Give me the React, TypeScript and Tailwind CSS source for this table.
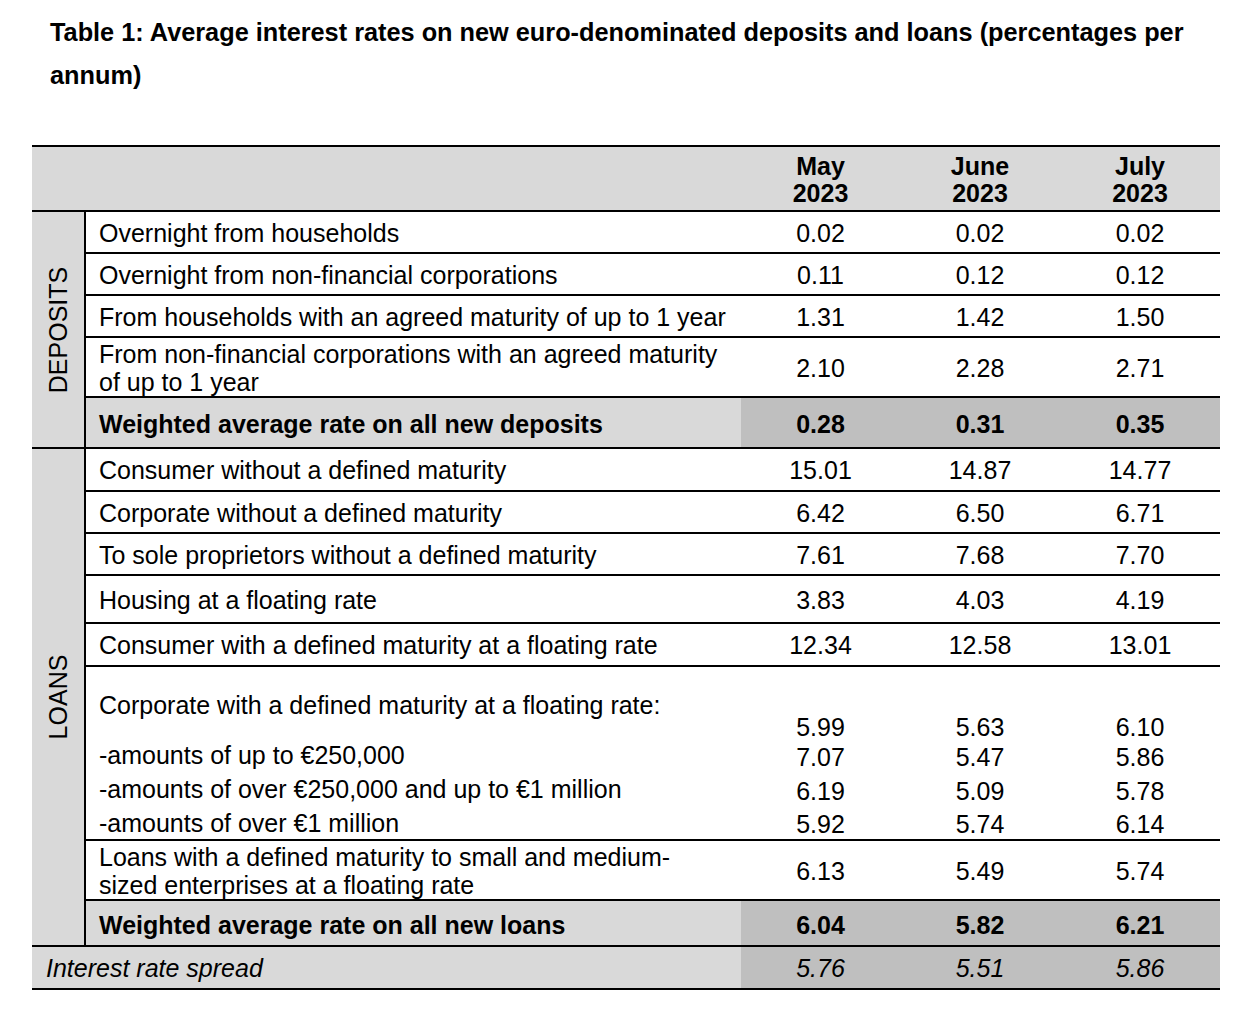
import React from "react"

type Row = {
  text: React.ReactNode
  values: string[]
  h: string
  kind?: "normal" | "total"
}

const font = { fontFamily: '"Liberation Sans", Arial, sans-serif' }

const colW = ["w-[159px]", "w-[160px]", "w-[160px]"]

const deposits: Row[] = [
  { text: "Overnight from households", values: ["0.02", "0.02", "0.02"], h: "h-[42px]" },
  { text: "Overnight from non-financial corporations", values: ["0.11", "0.12", "0.12"], h: "h-[42px]" },
  { text: "From households with an agreed maturity of up to 1 year", values: ["1.31", "1.42", "1.50"], h: "h-[42px]" },
  {
    text: (
      <>
        From non-financial corporations with an agreed maturity
        <br />
        of up to 1 year
      </>
    ),
    values: ["2.10", "2.28", "2.71"],
    h: "h-[60px]",
  },
  { text: "Weighted average rate on all new deposits", values: ["0.28", "0.31", "0.35"], h: "h-[49px]", kind: "total" },
]

const loansTop: Row[] = [
  { text: "Consumer without a defined maturity", values: ["15.01", "14.87", "14.77"], h: "h-[43px]" },
  { text: "Corporate without a defined maturity", values: ["6.42", "6.50", "6.71"], h: "h-[42px]" },
  { text: "To sole proprietors without a defined maturity", values: ["7.61", "7.68", "7.70"], h: "h-[42px]" },
  { text: "Housing at a floating rate", values: ["3.83", "4.03", "4.19"], h: "h-[48px]" },
  { text: "Consumer with a defined maturity at a floating rate", values: ["12.34", "12.58", "13.01"], h: "h-[43px]" },
]

const loansBottom: Row[] = [
  {
    text: (
      <>
        Loans with a defined maturity to small and medium-
        <br />
        sized enterprises at a floating rate
      </>
    ),
    values: ["6.13", "5.49", "5.74"],
    h: "h-[60px]",
  },
  { text: "Weighted average rate on all new loans", values: ["6.04", "5.82", "6.21"], h: "h-[44px]", kind: "total" },
]

const corporate = [
  ["5.99", "5.63", "6.10"],
  ["7.07", "5.47", "5.86"],
  ["6.19", "5.09", "5.78"],
  ["5.92", "5.74", "6.14"],
]
const corpLineH = ["h-[30px]", "h-[30px]", "h-[38px]", "h-[28px]"]

function TableRow({ row, last }: { row: Row; last?: boolean }) {
  const total = row.kind === "total"
  return (
    <div className={`flex ${row.h} ${last ? "" : "border-b-2 border-black"}`}>
      <div
        className={`flex flex-1 items-center pl-[13px] pt-[1px] leading-[28px] ${total ? "bg-[#d9d9d9] font-bold" : ""}`}
      >
        <div className={total ? "pt-[2px]" : ""}>{row.text}</div>
      </div>
      {row.values.map((v, i) => (
        <div
          key={i}
          className={`flex ${colW[i]} items-center justify-center pt-[1px] ${total ? "bg-[#bfbfbf] pt-[3px] font-bold" : ""}`}
        >
          {v}
        </div>
      ))}
    </div>
  )
}

function SideLabel({ children }: { children: React.ReactNode }) {
  return (
    <div className="flex w-[54px] shrink-0 items-center justify-center border-r-2 border-black bg-[#d9d9d9]">
      <span className="-rotate-90 whitespace-nowrap">{children}</span>
    </div>
  )
}

export default function App() {
  return (
    <div className="min-h-[1017px] w-[1251px] bg-white text-black" style={font}>
      <h1 className="ml-[50px] w-[1150px] pt-[11px] text-[25.3px] font-bold leading-[43px]">
        Table 1: Average interest rates on new euro-denominated deposits and loans (percentages per annum)
      </h1>

      <div className="ml-[32px] mt-[48px] w-[1188px] border-y-2 border-black text-[25px] leading-[28px]">
        {/* header */}
        <div className="flex h-[65px] border-b-2 border-black bg-[#d9d9d9] pt-[3px] font-bold leading-[27px]">
          <div className="flex-1" />
          {[
            ["May", "2023"],
            ["June", "2023"],
            ["July", "2023"],
          ].map(([m, y], i) => (
            <div key={m} className={`flex ${colW[i]} flex-col items-center justify-center`}>
              <span>{m}</span>
              <span>{y}</span>
            </div>
          ))}
        </div>

        {/* deposits */}
        <div className="flex border-b-2 border-black">
          <SideLabel>DEPOSITS</SideLabel>
          <div className="flex flex-1 flex-col">
            {deposits.map((r, i) => (
              <TableRow key={i} row={r} last={i === deposits.length - 1} />
            ))}
          </div>
        </div>

        {/* loans */}
        <div className="flex border-b-2 border-black">
          <SideLabel>LOANS</SideLabel>
          <div className="flex flex-1 flex-col">
            {loansTop.map((r, i) => (
              <TableRow key={i} row={r} />
            ))}

            <div className="flex h-[174px] border-b-2 border-black">
              <div className="flex flex-1 flex-col pl-[13px] pt-[21px] leading-[34px]">
                <div>Corporate with a defined maturity at a floating rate:</div>
                <div className="mt-[16px]">-amounts of up to €250,000</div>
                <div>-amounts of over €250,000 and up to €1 million</div>
                <div>-amounts of over €1 million</div>
              </div>
              {[0, 1, 2].map((c) => (
                <div key={c} className={`flex ${colW[c]} flex-col items-center pt-[45px]`}>
                  {corporate.map((vals, r) => (
                    <div key={r} className={`flex ${corpLineH[r]} items-center`}>
                      {vals[c]}
                    </div>
                  ))}
                </div>
              ))}
            </div>

            {loansBottom.map((r, i) => (
              <TableRow key={i} row={r} last={i === loansBottom.length - 1} />
            ))}
          </div>
        </div>

        {/* spread */}
        <div className="flex h-[41px] italic">
          <div className="flex flex-1 items-center bg-[#d9d9d9] pl-[14px]">Interest rate spread</div>
          {["5.76", "5.51", "5.86"].map((v, i) => (
            <div key={i} className={`flex ${colW[i]} items-center justify-center bg-[#bfbfbf]`}>
              {v}
            </div>
          ))}
        </div>
      </div>
    </div>
  )
}
